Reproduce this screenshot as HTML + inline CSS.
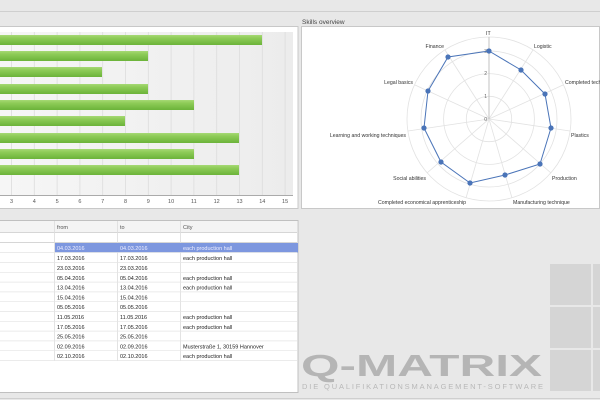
<!DOCTYPE html>
<html><head><meta charset="utf-8"><style>
html,body{margin:0;padding:0;width:600px;height:400px;overflow:hidden;background:#e8e8e8;font-family:"Liberation Sans",sans-serif}
</style></head><body>
<svg width="600" height="400" viewBox="0 0 600 400" xmlns="http://www.w3.org/2000/svg" font-family="Liberation Sans, sans-serif">
<defs>
<linearGradient id="bar" x1="0" y1="0" x2="0" y2="1">
<stop offset="0" stop-color="#a6d975"/><stop offset="0.3" stop-color="#8fcc58"/><stop offset="1" stop-color="#6cb33a"/></linearGradient>
<linearGradient id="plot" x1="0" y1="0" x2="1" y2="0">
<stop offset="0" stop-color="#f6f6f6"/><stop offset="1" stop-color="#ececec"/></linearGradient>
</defs>
<rect width="600" height="400" fill="#e8e8e8"/>
<line x1="0" y1="11.5" x2="600" y2="11.5" stroke="#cfcfcf"/>
<line x1="0" y1="398.5" x2="600" y2="398.5" stroke="#cfcfcf"/>
<!-- left chart panel -->
<rect x="-1" y="26.5" width="299" height="182" fill="#fff" stroke="#c8c8c8"/>
<rect x="0" y="32" width="293" height="163" fill="url(#plot)"/>
<g stroke="#dcdcdc" stroke-width="0.8">
<line x1="11.5" y1="32" x2="11.5" y2="195"/><line x1="34.3" y1="32" x2="34.3" y2="195"/><line x1="57.1" y1="32" x2="57.1" y2="195"/><line x1="79.9" y1="32" x2="79.9" y2="195"/><line x1="102.7" y1="32" x2="102.7" y2="195"/><line x1="125.5" y1="32" x2="125.5" y2="195"/><line x1="148.3" y1="32" x2="148.3" y2="195"/><line x1="171.1" y1="32" x2="171.1" y2="195"/><line x1="193.9" y1="32" x2="193.9" y2="195"/><line x1="216.7" y1="32" x2="216.7" y2="195"/><line x1="239.5" y1="32" x2="239.5" y2="195"/><line x1="262.3" y1="32" x2="262.3" y2="195"/><line x1="285.1" y1="32" x2="285.1" y2="195"/>
</g>
<line x1="0" y1="195.5" x2="293" y2="195.5" stroke="#aaa"/>
<g fill="url(#bar)">
<rect x="0" y="35" width="262" height="10"/>
<rect x="0" y="51" width="148" height="10"/>
<rect x="0" y="67" width="102" height="10"/>
<rect x="0" y="84" width="148" height="10"/>
<rect x="0" y="100" width="194" height="10"/>
<rect x="0" y="116" width="125" height="10"/>
<rect x="0" y="133" width="239" height="10"/>
<rect x="0" y="149" width="194" height="10"/>
<rect x="0" y="165" width="239" height="10"/>
</g>
<g font-size="5.5" fill="#555" text-anchor="middle">
<text x="11.5" y="203">3</text><text x="34.3" y="203">4</text><text x="57.1" y="203">5</text><text x="79.9" y="203">6</text><text x="102.7" y="203">7</text><text x="125.5" y="203">8</text><text x="148.3" y="203">9</text><text x="171.1" y="203">10</text><text x="193.9" y="203">11</text><text x="216.7" y="203">12</text><text x="239.5" y="203">13</text><text x="262.3" y="203">14</text><text x="285.1" y="203">15</text>
</g>
<!-- right radar panel -->
<text x="302" y="24" font-size="6.5" fill="#444">Skills overview</text>
<rect x="301.5" y="26.5" width="298" height="182" fill="#fff" stroke="#c8c8c8"/>
<g fill="none" stroke="#e2e2e2" stroke-width="0.8">
<circle cx="489" cy="119" r="22.7"/><circle cx="489" cy="119" r="45.4"/><circle cx="489" cy="119" r="68"/><circle cx="489" cy="119" r="82"/>
<line x1="489" y1="119" x2="489" y2="37"/><line x1="489" y1="119" x2="533" y2="50"/><line x1="489" y1="119" x2="563" y2="85"/><line x1="489" y1="119" x2="570" y2="131"/><line x1="489" y1="119" x2="551" y2="173"/><line x1="489" y1="119" x2="512" y2="198"/><line x1="489" y1="119" x2="466" y2="198"/><line x1="489" y1="119" x2="427" y2="173"/><line x1="489" y1="119" x2="408" y2="131"/><line x1="489" y1="119" x2="415" y2="85"/><line x1="489" y1="119" x2="445" y2="50"/>
</g>
<line x1="489" y1="37" x2="489" y2="119" stroke="#aaa" stroke-width="0.6"/>
<g font-size="5" fill="#666" text-anchor="end"><text x="487" y="53">3</text><text x="487" y="75">2</text><text x="487" y="98">1</text><text x="487" y="121">0</text></g>
<polygon points="489,51 521,70 545,94 551,128 540,164 505,175 470,183 441,162 424,128 428,91 448,57" fill="none" stroke="#4a74b8" stroke-width="1"/>
<g fill="#4a74b8">
<circle cx="489" cy="51" r="2.6"/><circle cx="521" cy="70" r="2.6"/><circle cx="545" cy="94" r="2.6"/><circle cx="551" cy="128" r="2.6"/><circle cx="540" cy="164" r="2.6"/><circle cx="505" cy="175" r="2.6"/><circle cx="470" cy="183" r="2.6"/><circle cx="441" cy="162" r="2.6"/><circle cx="424" cy="128" r="2.6"/><circle cx="428" cy="91" r="2.6"/><circle cx="448" cy="57" r="2.6"/>
</g>
<g font-size="5.2" fill="#333">
<text x="486" y="35">IT</text>
<text x="534" y="48">Logistic</text>
<text x="565" y="84">Completed tech</text>
<text x="571" y="137">Plastics</text>
<text x="552" y="180">Production</text>
<text x="513" y="204">Manufacturing technique</text>
<text x="466" y="204" text-anchor="end">Completed economical apprenticeship</text>
<text x="426" y="180" text-anchor="end">Social abilities</text>
<text x="406" y="137" text-anchor="end">Learning and working techniques</text>
<text x="413" y="84" text-anchor="end">Legal basics</text>
<text x="444" y="48" text-anchor="end">Finance</text>
</g>
<!-- table panel -->
<rect x="-1" y="220.5" width="299" height="172" fill="#fff" stroke="#c0c0c0"/>
<rect x="0" y="221" width="297" height="11" fill="#f4f4f4"/>
<line x1="0" y1="232.5" x2="297" y2="232.5" stroke="#d6d6d6"/>
<line x1="0" y1="242.5" x2="297" y2="242.5" stroke="#d6d6d6"/>
<g stroke="#dcdcdc" stroke-width="0.8">
<line x1="54.5" y1="221" x2="54.5" y2="361"/><line x1="117.5" y1="221" x2="117.5" y2="361"/><line x1="180.5" y1="221" x2="180.5" y2="361"/>
</g>
<g font-size="5.5" fill="#555"><text x="57" y="229">from</text><text x="120" y="229">to</text><text x="183" y="229">City</text></g>
<rect x="55" y="243" width="243" height="9.5" fill="#7d97df"/>
<g stroke="#e4e4e4" stroke-width="0.7">
<line x1="0" y1="252.5" x2="297" y2="252.5"/><line x1="0" y1="262.5" x2="297" y2="262.5"/><line x1="0" y1="272.3" x2="297" y2="272.3"/><line x1="0" y1="282.1" x2="297" y2="282.1"/><line x1="0" y1="291.9" x2="297" y2="291.9"/><line x1="0" y1="301.7" x2="297" y2="301.7"/><line x1="0" y1="311.5" x2="297" y2="311.5"/><line x1="0" y1="321.3" x2="297" y2="321.3"/><line x1="0" y1="331.1" x2="297" y2="331.1"/><line x1="0" y1="340.9" x2="297" y2="340.9"/><line x1="0" y1="350.7" x2="297" y2="350.7"/><line x1="0" y1="360.5" x2="297" y2="360.5"/>
</g>
<g font-size="5.5" fill="#222">
<g fill="#eef"><text x="57" y="250">04.03.2016</text><text x="120" y="250">04.03.2016</text><text x="183" y="250">each production hall</text></g>
<text x="57" y="260">17.03.2016</text><text x="120" y="260">17.03.2016</text><text x="183" y="260">each production hall</text>
<text x="57" y="270">23.03.2016</text><text x="120" y="270">23.03.2016</text>
<text x="57" y="280">05.04.2016</text><text x="120" y="280">05.04.2016</text><text x="183" y="280">each production hall</text>
<text x="57" y="289.5">13.04.2016</text><text x="120" y="289.5">13.04.2016</text><text x="183" y="289.5">each production hall</text>
<text x="57" y="299.3">15.04.2016</text><text x="120" y="299.3">15.04.2016</text>
<text x="57" y="309">05.05.2016</text><text x="120" y="309">05.05.2016</text>
<text x="57" y="319">11.05.2016</text><text x="120" y="319">11.05.2016</text><text x="183" y="319">each production hall</text>
<text x="57" y="328.8">17.05.2016</text><text x="120" y="328.8">17.05.2016</text><text x="183" y="328.8">each production hall</text>
<text x="57" y="338.5">25.05.2016</text><text x="120" y="338.5">25.05.2016</text>
<text x="57" y="348.3">02.09.2016</text><text x="120" y="348.3">02.09.2016</text><text x="183" y="348.3">Musterstraße 1, 30159 Hannover</text>
<text x="57" y="358">02.10.2016</text><text x="120" y="358">02.10.2016</text><text x="183" y="358">each production hall</text>
</g>
<!-- logo -->
<g fill="#d5d5d5">
<rect x="550" y="264" width="41" height="41"/><rect x="593" y="264" width="10" height="41"/>
<rect x="550" y="307" width="41" height="41"/><rect x="593" y="307" width="10" height="41"/>
<rect x="550" y="350" width="41" height="41"/><rect x="593" y="350" width="10" height="41"/>
</g>
<text x="301" y="376" font-size="31" font-weight="bold" fill="#b5b5b5" textLength="241" lengthAdjust="spacingAndGlyphs">Q-MATRIX</text>
<text x="302" y="389" font-size="7.5" fill="#b8b8b8" textLength="241" lengthAdjust="spacing">DIE QUALIFIKATIONSMANAGEMENT-SOFTWARE</text>
</svg>
</body></html>
